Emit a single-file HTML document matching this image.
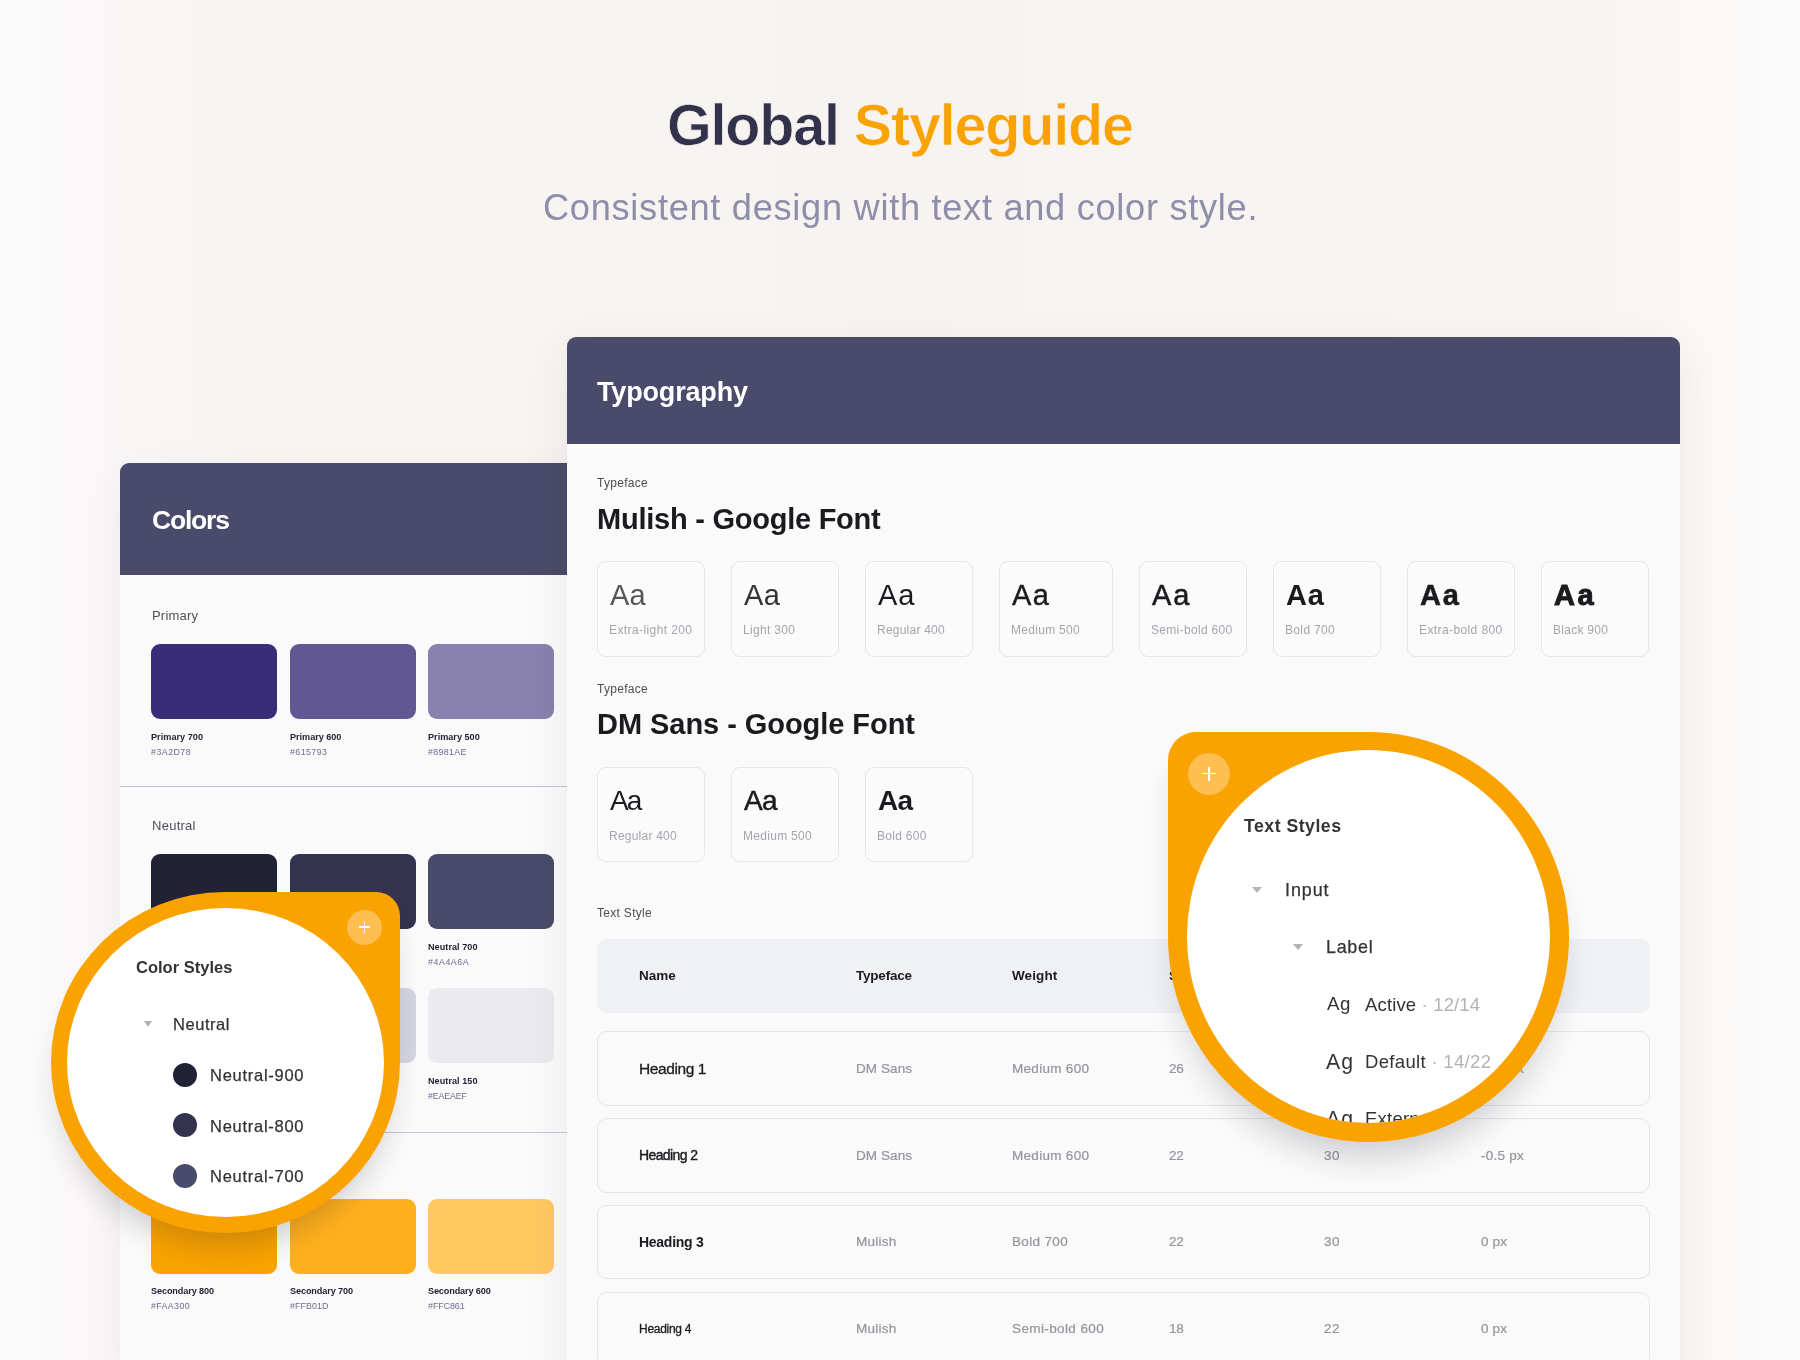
<!DOCTYPE html>
<html lang="en"><head><meta charset="utf-8"><title>Global Styleguide</title>
<style>
html,body{margin:0;padding:0}
body{width:1800px;height:1360px;overflow:hidden;position:relative;font-family:"Liberation Sans",sans-serif;
background:linear-gradient(90deg,#FBFAFA 0,#FAF8F8 4%,#F8F6F4 10%,#F7F4F2 17%,#F7F3F1 50%,#F7F4F2 83%,#F8F6F5 90%,#FAF9F8 96%,#FBFAFA 100%)}
.t{position:absolute;white-space:pre;line-height:1;will-change:transform}
.a{position:absolute}
.sw{position:absolute;width:126px;height:75px;border-radius:9px}
.card{position:absolute;box-sizing:border-box;border:1px solid #E7E7EB;border-radius:9px;background:#FBFBFC}
.row{position:absolute;box-sizing:border-box;left:30px;width:1052.6px;height:74.4px;border:1px solid #E6E6EA;border-radius:10px;background:#FAFAFB}
.hr{position:absolute;left:0;width:600px;height:1px;background:#C4C4D6}
.plus{position:absolute;border-radius:50%;background:#FFBE52}
.blur{filter:blur(0.45px)}
</style></head><body>
<div class="t" style="left:666.6px;top:97.13px;font-size:57.5px;font-weight:700;color:#32324D;letter-spacing:-1.166px;-webkit-text-stroke:0.7px #F7F3F1;">Global <span style="color:#FAA300">Styleguide</span></div>
<div class="t" style="left:543.0px;top:190.36px;font-size:36.2px;color:#8E8EAA;letter-spacing:0.712px;">Consistent design with text and color style.</div>
<div class="a" style="left:120px;top:463px;width:600px;height:920px;border-radius:9px 9px 0 0;background:#FAFAFB;box-shadow:0 12px 44px rgba(40,36,36,.05);overflow:hidden">
<div class="a" style="left:0;top:0;width:600px;height:112px;background:#4A4A6A"></div>
<div class="t" style="left:32.0px;top:44.27px;font-size:26.5px;font-weight:700;color:#fff;letter-spacing:-1.188px;">Colors</div>
<div class="t" style="left:32.0px;top:146.00px;font-size:13px;color:#505058;letter-spacing:0.203px;">Primary</div>
<div class="sw" style="left:31.4px;top:181.2px;background:#3A2D78"></div>
<div class="sw" style="left:169.9px;top:181.2px;background:#615793"></div>
<div class="sw" style="left:308.4px;top:181.2px;background:#8981AE"></div>
<div class="sw" style="left:446.9px;top:181.2px;background:#B5B0CC"></div>
<div class="t" style="left:31.4px;top:269.90px;font-size:9.1px;font-weight:700;color:#222236;letter-spacing:0.042px;">Primary 700</div>
<div class="t" style="left:31.4px;top:284.97px;font-size:8.9px;color:#6F6A94;letter-spacing:0.447px;">#3A2D78</div>
<div class="t" style="left:169.9px;top:269.90px;font-size:9.1px;font-weight:700;color:#222236;letter-spacing:-0.018px;">Primary 600</div>
<div class="t" style="left:169.9px;top:284.97px;font-size:8.9px;color:#6F6A94;letter-spacing:0.406px;">#615793</div>
<div class="t" style="left:308.4px;top:269.90px;font-size:9.1px;font-weight:700;color:#222236;letter-spacing:0.012px;">Primary 500</div>
<div class="t" style="left:308.4px;top:284.97px;font-size:8.9px;color:#6F6A94;letter-spacing:0.311px;">#8981AE</div>
<div class="hr" style="top:323.0px"></div>
<div class="t" style="left:32.0px;top:356.00px;font-size:13px;color:#505058;letter-spacing:0.263px;">Neutral</div>
<div class="sw" style="left:31.4px;top:391.2px;background:#222236"></div>
<div class="sw" style="left:169.9px;top:391.2px;background:#33334F"></div>
<div class="sw" style="left:308.4px;top:391.2px;background:#4A4A6A"></div>
<div class="sw" style="left:446.9px;top:391.2px;background:#6A6A8A"></div>
<div class="t" style="left:31.4px;top:480.10px;font-size:9.1px;font-weight:700;color:#222236;letter-spacing:0.047px;">Neutral 900</div>
<div class="t" style="left:31.4px;top:495.17px;font-size:8.9px;color:#6F6A94;letter-spacing:0.906px;">#222236</div>
<div class="t" style="left:169.9px;top:480.10px;font-size:9.1px;font-weight:700;color:#222236;letter-spacing:0.047px;">Neutral 800</div>
<div class="t" style="left:169.9px;top:495.17px;font-size:8.9px;color:#6F6A94;letter-spacing:0.826px;">#33334F</div>
<div class="t" style="left:308.4px;top:480.10px;font-size:9.1px;font-weight:700;color:#222236;letter-spacing:0.047px;">Neutral 700</div>
<div class="t" style="left:308.4px;top:495.17px;font-size:8.9px;color:#6F6A94;letter-spacing:0.531px;">#4A4A6A</div>
<div class="sw" style="left:31.4px;top:525.3px;background:#B8B8C8"></div>
<div class="sw" style="left:169.9px;top:525.3px;background:#D5D5DF"></div>
<div class="sw" style="left:308.4px;top:525.3px;background:#EAEAEF"></div>
<div class="sw" style="left:446.9px;top:525.3px;background:#F3F3F6"></div>
<div class="t" style="left:31.4px;top:614.00px;font-size:9.1px;font-weight:700;color:#222236;letter-spacing:0.047px;">Neutral 300</div>
<div class="t" style="left:31.4px;top:629.07px;font-size:8.9px;color:#6F6A94;letter-spacing:0.333px;">#B8B8C8</div>
<div class="t" style="left:169.9px;top:614.00px;font-size:9.1px;font-weight:700;color:#222236;letter-spacing:0.047px;">Neutral 200</div>
<div class="t" style="left:169.9px;top:629.07px;font-size:8.9px;color:#6F6A94;letter-spacing:0.089px;">#D5D5DF</div>
<div class="t" style="left:308.4px;top:614.00px;font-size:9.1px;font-weight:700;color:#222236;letter-spacing:0.047px;">Neutral 150</div>
<div class="t" style="left:308.4px;top:629.07px;font-size:8.9px;color:#6F6A94;letter-spacing:-0.178px;">#EAEAEF</div>
<div class="hr" style="top:669.0px"></div>
<div class="t" style="left:32.0px;top:701.00px;font-size:13px;color:#505058;letter-spacing:-0.270px;">Secondary</div>
<div class="sw" style="left:31.4px;top:735.5px;background:#FAA300"></div>
<div class="sw" style="left:169.9px;top:735.5px;background:#FFB01D"></div>
<div class="sw" style="left:308.4px;top:735.5px;background:#FFC861"></div>
<div class="sw" style="left:446.9px;top:735.5px;background:#FFDD9E"></div>
<div class="t" style="left:31.4px;top:824.30px;font-size:9.1px;font-weight:700;color:#222236;letter-spacing:-0.100px;">Secondary 800</div>
<div class="t" style="left:31.4px;top:839.37px;font-size:8.9px;color:#6F6A94;letter-spacing:0.347px;">#FAA300</div>
<div class="t" style="left:169.9px;top:824.30px;font-size:9.1px;font-weight:700;color:#222236;letter-spacing:-0.100px;">Secondary 700</div>
<div class="t" style="left:169.9px;top:839.37px;font-size:8.9px;color:#6F6A94;letter-spacing:0.053px;">#FFB01D</div>
<div class="t" style="left:308.4px;top:824.30px;font-size:9.1px;font-weight:700;color:#222236;letter-spacing:-0.125px;">Secondary 600</div>
<div class="t" style="left:308.4px;top:839.37px;font-size:8.9px;color:#6F6A94;letter-spacing:-0.050px;">#FFC861</div>
</div>
<div class="a" style="left:567px;top:337px;width:1113px;height:1060px;border-radius:9px 9px 0 0;background:#FAFAFB;box-shadow:0 14px 46px rgba(40,36,40,.075)">
<div class="a" style="left:0;top:0;width:1113px;height:107px;background:#4A4A6A;border-radius:9px 9px 0 0"></div>
<div class="t" style="left:30.0px;top:41.84px;font-size:27px;font-weight:700;color:#fff;letter-spacing:-0.168px;">Typography</div>
<div class="t" style="left:30.0px;top:140.14px;font-size:12px;color:#4E4E52;letter-spacing:0.285px;">Typeface</div>
<div class="t" style="left:30.0px;top:167.75px;font-size:29px;font-weight:700;color:#1B1B1F;letter-spacing:-0.244px;">Mulish - Google Font</div>
<div class="card" style="left:30.3px;top:224.0px;width:108.0px;height:95.7px"></div>
<div class="t" style="left:42.8px;top:244.45px;font-size:29px;color:#555;letter-spacing:0.216px;">Aa</div>
<div class="t" style="left:42.3px;top:286.84px;font-size:12px;color:#A4A4AC;letter-spacing:0.402px;">Extra-light 200</div>
<div class="card" style="left:164.3px;top:224.0px;width:108.0px;height:95.7px"></div>
<div class="t" style="left:176.8px;top:244.45px;font-size:29px;color:#333;letter-spacing:0.516px;">Aa</div>
<div class="t" style="left:176.3px;top:286.84px;font-size:12px;color:#A4A4AC;letter-spacing:0.326px;">Light 300</div>
<div class="card" style="left:298.3px;top:224.0px;width:108.0px;height:95.7px"></div>
<div class="t" style="left:310.8px;top:244.45px;font-size:29px;color:#1B1B1F;letter-spacing:1.016px;">Aa</div>
<div class="t" style="left:310.3px;top:286.84px;font-size:12px;color:#A4A4AC;letter-spacing:0.231px;">Regular 400</div>
<div class="card" style="left:432.3px;top:224.0px;width:114.0px;height:95.7px"></div>
<div class="t" style="left:444.8px;top:244.45px;font-size:29px;color:#1B1B1F;letter-spacing:1.516px;-webkit-text-stroke:0.4px #1B1B1F;">Aa</div>
<div class="t" style="left:444.3px;top:286.84px;font-size:12px;color:#A4A4AC;letter-spacing:0.295px;">Medium 500</div>
<div class="card" style="left:572.3px;top:224.0px;width:108.0px;height:95.7px"></div>
<div class="t" style="left:584.8px;top:244.45px;font-size:29px;color:#1B1B1F;letter-spacing:1.816px;-webkit-text-stroke:0.55px #1B1B1F;">Aa</div>
<div class="t" style="left:584.3px;top:286.84px;font-size:12px;color:#A4A4AC;letter-spacing:0.317px;">Semi-bold 600</div>
<div class="card" style="left:706.3px;top:224.0px;width:108.0px;height:95.7px"></div>
<div class="t" style="left:718.8px;top:244.45px;font-size:29px;font-weight:700;color:#1B1B1F;letter-spacing:0.922px;">Aa</div>
<div class="t" style="left:718.3px;top:286.84px;font-size:12px;color:#A4A4AC;letter-spacing:0.346px;">Bold 700</div>
<div class="card" style="left:840.3px;top:224.0px;width:108.0px;height:95.7px"></div>
<div class="t" style="left:852.8px;top:244.45px;font-size:29px;font-weight:700;color:#1B1B1F;letter-spacing:1.922px;-webkit-text-stroke:0.5px #1B1B1F;">Aa</div>
<div class="t" style="left:852.3px;top:286.84px;font-size:12px;color:#A4A4AC;letter-spacing:0.396px;">Extra-bold 800</div>
<div class="card" style="left:974.3px;top:224.0px;width:108.0px;height:95.7px"></div>
<div class="t" style="left:986.8px;top:244.45px;font-size:29px;font-weight:700;color:#1B1B1F;letter-spacing:2.622px;-webkit-text-stroke:1px #1B1B1F;">Aa</div>
<div class="t" style="left:986.3px;top:286.84px;font-size:12px;color:#A4A4AC;letter-spacing:0.275px;">Black 900</div>
<div class="t" style="left:30.0px;top:345.84px;font-size:12px;color:#4E4E52;letter-spacing:0.285px;">Typeface</div>
<div class="t" style="left:30.0px;top:373.45px;font-size:29px;font-weight:700;color:#1B1B1F;letter-spacing:-0.050px;">DM Sans - Google Font</div>
<div class="card" style="left:30.3px;top:429.7px;width:108.0px;height:95.7px"></div>
<div class="t" style="left:42.8px;top:450.30px;font-size:28px;color:#1B1B1F;letter-spacing:-1.950px;">Aa</div>
<div class="t" style="left:42.3px;top:492.54px;font-size:12px;color:#A4A4AC;letter-spacing:0.231px;">Regular 400</div>
<div class="card" style="left:164.3px;top:429.7px;width:108.0px;height:95.7px"></div>
<div class="t" style="left:176.8px;top:450.30px;font-size:28px;color:#1B1B1F;letter-spacing:-0.750px;-webkit-text-stroke:0.5px #1B1B1F;">Aa</div>
<div class="t" style="left:176.3px;top:492.54px;font-size:12px;color:#A4A4AC;letter-spacing:0.295px;">Medium 500</div>
<div class="card" style="left:298.3px;top:429.7px;width:108.0px;height:95.7px"></div>
<div class="t" style="left:310.8px;top:450.30px;font-size:28px;font-weight:700;color:#1B1B1F;letter-spacing:-0.797px;">Aa</div>
<div class="t" style="left:310.3px;top:492.54px;font-size:12px;color:#A4A4AC;letter-spacing:0.289px;">Bold 600</div>
<div class="t" style="left:30.0px;top:570.14px;font-size:12px;color:#4E4E52;letter-spacing:0.297px;">Text Style</div>
<div class="a" style="left:30px;top:602.0px;width:1052.6px;height:74.3px;border-radius:10px;background:#F0F1F4"></div>
<div class="t" style="left:72.3px;top:632.27px;font-size:13.5px;font-weight:700;color:#1B1B1F;letter-spacing:-0.027px;">Name</div>
<div class="t" style="left:288.7px;top:632.27px;font-size:13.5px;font-weight:700;color:#1B1B1F;letter-spacing:-0.219px;">Typeface</div>
<div class="t" style="left:445.0px;top:632.27px;font-size:13.5px;font-weight:700;color:#1B1B1F;letter-spacing:0.110px;">Weight</div>
<div class="t" style="left:601.5px;top:632.27px;font-size:13.5px;font-weight:700;color:#1B1B1F;">Size</div>
<div class="t" style="left:757.4px;top:632.27px;font-size:13.5px;font-weight:700;color:#1B1B1F;">Line Height</div>
<div class="t" style="left:914.2px;top:632.27px;font-size:13.5px;font-weight:700;color:#1B1B1F;">Spacing</div>
<div class="row" style="top:694.4px"></div>
<div class="t" style="left:72.3px;top:723.78px;font-size:15.5px;color:#1B1B1F;letter-spacing:-0.409px;-webkit-text-stroke:0.3px #1B1B1F;">Heading 1</div>
<div class="t" style="left:288.7px;top:724.97px;font-size:13.5px;color:#94949C;letter-spacing:0.078px;-webkit-text-stroke:0.22px #94949C;">DM Sans</div>
<div class="t" style="left:445.0px;top:724.97px;font-size:13.5px;color:#94949C;letter-spacing:0.300px;-webkit-text-stroke:0.22px #94949C;">Medium 600</div>
<div class="t" style="left:601.5px;top:724.97px;font-size:13.5px;color:#94949C;letter-spacing:-0.331px;-webkit-text-stroke:0.22px #94949C;">26</div>
<div class="t" style="left:757.4px;top:724.97px;font-size:13.5px;color:#94949C;letter-spacing:0.569px;-webkit-text-stroke:0.22px #94949C;">34</div>
<div class="t" style="left:914.2px;top:724.97px;font-size:13.5px;color:#94949C;letter-spacing:0.253px;-webkit-text-stroke:0.22px #94949C;">-0.5 px</div>
<div class="row" style="top:781.2px"></div>
<div class="t" style="left:72.3px;top:811.35px;font-size:14px;color:#1B1B1F;letter-spacing:-0.604px;-webkit-text-stroke:0.4px #1B1B1F;">Heading 2</div>
<div class="t" style="left:288.7px;top:811.77px;font-size:13.5px;color:#94949C;letter-spacing:0.078px;-webkit-text-stroke:0.22px #94949C;">DM Sans</div>
<div class="t" style="left:445.0px;top:811.77px;font-size:13.5px;color:#94949C;letter-spacing:0.300px;-webkit-text-stroke:0.22px #94949C;">Medium 600</div>
<div class="t" style="left:601.5px;top:811.77px;font-size:13.5px;color:#94949C;letter-spacing:-0.331px;-webkit-text-stroke:0.22px #94949C;">22</div>
<div class="t" style="left:757.4px;top:811.77px;font-size:13.5px;color:#94949C;letter-spacing:0.569px;-webkit-text-stroke:0.22px #94949C;">30</div>
<div class="t" style="left:914.2px;top:811.77px;font-size:13.5px;color:#94949C;letter-spacing:0.253px;-webkit-text-stroke:0.22px #94949C;">-0.5 px</div>
<div class="row" style="top:867.9px"></div>
<div class="t" style="left:72.3px;top:898.05px;font-size:14px;font-weight:700;color:#1B1B1F;letter-spacing:-0.276px;">Heading 3</div>
<div class="t" style="left:288.7px;top:898.47px;font-size:13.5px;color:#94949C;letter-spacing:0.257px;-webkit-text-stroke:0.22px #94949C;">Mulish</div>
<div class="t" style="left:445.0px;top:898.47px;font-size:13.5px;color:#94949C;letter-spacing:0.343px;-webkit-text-stroke:0.22px #94949C;">Bold 700</div>
<div class="t" style="left:601.5px;top:898.47px;font-size:13.5px;color:#94949C;letter-spacing:-0.331px;-webkit-text-stroke:0.22px #94949C;">22</div>
<div class="t" style="left:757.4px;top:898.47px;font-size:13.5px;color:#94949C;letter-spacing:0.569px;-webkit-text-stroke:0.22px #94949C;">30</div>
<div class="t" style="left:914.2px;top:898.47px;font-size:13.5px;color:#94949C;letter-spacing:0.156px;-webkit-text-stroke:0.22px #94949C;">0 px</div>
<div class="row" style="top:954.6px"></div>
<div class="t" style="left:72.3px;top:986.44px;font-size:12px;color:#1B1B1F;letter-spacing:-0.290px;-webkit-text-stroke:0.3px #1B1B1F;">Heading 4</div>
<div class="t" style="left:288.7px;top:985.17px;font-size:13.5px;color:#94949C;letter-spacing:0.257px;-webkit-text-stroke:0.22px #94949C;">Mulish</div>
<div class="t" style="left:445.0px;top:985.17px;font-size:13.5px;color:#94949C;letter-spacing:0.386px;-webkit-text-stroke:0.22px #94949C;">Semi-bold 600</div>
<div class="t" style="left:601.5px;top:985.17px;font-size:13.5px;color:#94949C;letter-spacing:-0.331px;-webkit-text-stroke:0.22px #94949C;">18</div>
<div class="t" style="left:757.4px;top:985.17px;font-size:13.5px;color:#94949C;letter-spacing:0.569px;-webkit-text-stroke:0.22px #94949C;">22</div>
<div class="t" style="left:914.2px;top:985.17px;font-size:13.5px;color:#94949C;letter-spacing:0.156px;-webkit-text-stroke:0.22px #94949C;">0 px</div>
</div>
<div class="a" style="left:51.2px;top:891.6px;width:348.4px;height:341.5px;border-radius:50% 24px 50% 50%/50% 24px 50% 50%;background:#FAA300;box-shadow:0 22px 30px -10px rgba(25,25,35,.20)"></div>
<div class="plus" style="left:346.8px;top:909.6px;width:35.4px;height:35.4px"><i class="a" style="left:11.9px;top:16.9px;width:11.6px;height:1.6px;background:#fff"></i><i class="a" style="left:16.9px;top:11.9px;width:1.6px;height:11.6px;background:#fff"></i></div>
<div class="a blur" style="left:67.2px;top:907.6px;width:316.4px;height:309.5px;border-radius:50%;background:#fff;overflow:hidden">
<div class="t" style="left:68.6px;top:51.83px;font-size:16.5px;font-weight:700;color:#333336;letter-spacing:0.011px;">Color Styles</div>
<div class="a" style="left:77.2px;top:113.4px;width:0;height:0;border-left:4.5px solid transparent;border-right:4.5px solid transparent;border-top:6px solid #B3B3B3"></div>
<div class="t" style="left:106.3px;top:108.73px;font-size:16.5px;color:#333336;letter-spacing:0.549px;-webkit-text-stroke:0.25px #333336;">Neutral</div>
<div class="a" style="left:105.6px;top:155.1px;width:24px;height:24px;border-radius:50%;background:#222236"></div>
<div class="t" style="left:142.4px;top:159.33px;font-size:16.5px;color:#333336;letter-spacing:0.728px;-webkit-text-stroke:0.25px #333336;">Neutral-900</div>
<div class="a" style="left:105.6px;top:205.7px;width:24px;height:24px;border-radius:50%;background:#33334F"></div>
<div class="t" style="left:142.4px;top:209.93px;font-size:16.5px;color:#333336;letter-spacing:0.728px;-webkit-text-stroke:0.25px #333336;">Neutral-800</div>
<div class="a" style="left:105.6px;top:256.3px;width:24px;height:24px;border-radius:50%;background:#4A4A6A"></div>
<div class="t" style="left:142.4px;top:260.53px;font-size:16.5px;color:#333336;letter-spacing:0.728px;-webkit-text-stroke:0.25px #333336;">Neutral-700</div>
</div>
<div class="a" style="left:1168.2px;top:731.7px;width:400.5px;height:410.0px;border-radius:28px 50% 50% 50%/28px 50% 50% 50%;background:#FAA300;box-shadow:0 26px 34px -12px rgba(25,25,35,.20)"></div>
<div class="plus" style="left:1188.4px;top:752.6px;width:42px;height:42px"><i class="a" style="left:14px;top:20.1px;width:14px;height:1.8px;background:#fff"></i><i class="a" style="left:20.1px;top:14px;width:1.8px;height:14px;background:#fff"></i></div>
<div class="a blur" style="left:1186.8px;top:750.3px;width:363.3px;height:372.8px;border-radius:50%;background:#fff;overflow:hidden">
<div class="t" style="left:57.1px;top:67.92px;font-size:17.7px;font-weight:700;color:#333336;letter-spacing:0.491px;">Text Styles</div>
<div class="a" style="left:65.7px;top:136.4px;width:0;height:0;border-left:5.4px solid transparent;border-right:5.4px solid transparent;border-top:6.8px solid #B3B3B3"></div>
<div class="t" style="left:98.3px;top:131.55px;font-size:17.9px;color:#333336;letter-spacing:0.951px;-webkit-text-stroke:0.25px #333336;">Input</div>
<div class="a" style="left:106.5px;top:193.6px;width:0;height:0;border-left:5.4px solid transparent;border-right:5.4px solid transparent;border-top:6.8px solid #B3B3B3"></div>
<div class="t" style="left:138.8px;top:188.75px;font-size:17.9px;color:#333336;letter-spacing:0.730px;-webkit-text-stroke:0.25px #333336;">Label</div>
<div class="t" style="left:140.7px;top:245.07px;font-size:18.7px;color:#333336;letter-spacing:0.541px;">Ag</div>
<div class="t" style="left:178.5px;top:245.24px;font-size:18.5px;color:#333336;letter-spacing:0.151px;">Active<span style="color:#B3B3B3"> · 12/14</span></div>
<div class="t" style="left:138.8px;top:300.45px;font-size:21.2px;color:#333336;letter-spacing:1.078px;">Ag</div>
<div class="t" style="left:178.5px;top:302.74px;font-size:18.5px;color:#333336;letter-spacing:0.330px;">Default<span style="color:#B3B3B3"> · 14/22</span></div>
<div class="t" style="left:138.8px;top:357.75px;font-size:21.2px;color:#333336;letter-spacing:1.078px;">Ag</div>
<div class="t" style="left:178.5px;top:360.04px;font-size:18.5px;color:#333336;letter-spacing:0.225px;">External<span style="color:#B3B3B3"> · 14/22</span></div>
</div>
</body></html>
